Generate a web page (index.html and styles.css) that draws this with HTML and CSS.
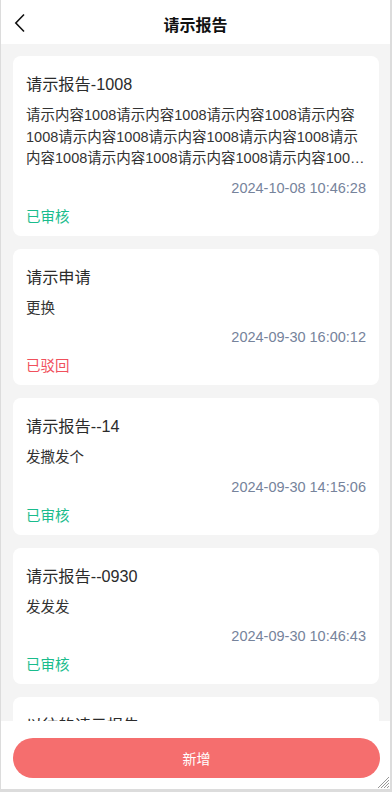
FILE: index.html
```html
<!DOCTYPE html>
<html lang="zh-CN">
<head>
    <meta charset="UTF-8">
    <meta name="viewport" content="width=device-width, initial-scale=1.0">
    <title>请示报告</title>
    <link rel="stylesheet" href="styles.css">
</head>
<body>
    <div class="frame">
        <!-- Header -->
        <header class="nav-bar">
            <a href="#" class="nav-back">
                <svg width="12" height="20" viewBox="0 0 12 20">
                    <path d="M10 1.5 L1.8 10 L10 18.5" fill="none" stroke="#111" stroke-width="1.6"/>
                </svg>
            </a>
            <h1 class="nav-title">请示报告</h1>
            <span></span>
        </header>

        <!-- Report List -->
        <section class="report-list">
            <div class="report-card">
                <h2 class="report-title">请示报告-1008</h2>
                <p class="report-content">请示内容1008请示内容1008请示内容1008请示内容1008请示内容1008请示内容1008请示内容1008请示内容1008请示内容1008请示内容1008请示内容1008请示内容1008</p>
                <p class="report-time">2024-10-08 10:46:28</p>
                <p class="report-status approved">已审核</p>
            </div>
            <div class="report-card">
                <h2 class="report-title">请示申请</h2>
                <p class="report-content">更换</p>
                <p class="report-time">2024-09-30 16:00:12</p>
                <p class="report-status rejected">已驳回</p>
            </div>
            <div class="report-card">
                <h2 class="report-title">请示报告--14</h2>
                <p class="report-content">发撒发个</p>
                <p class="report-time">2024-09-30 14:15:06</p>
                <p class="report-status approved">已审核</p>
            </div>
            <div class="report-card">
                <h2 class="report-title">请示报告--0930</h2>
                <p class="report-content">发发发</p>
                <p class="report-time">2024-09-30 10:46:43</p>
                <p class="report-status approved">已审核</p>
            </div>
            <div class="report-card">
                <h2 class="report-title">以往的请示报告</h2>
                <p class="report-content">内容</p>
                <p class="report-time">2024-09-29 09:12:30</p>
                <p class="report-status approved">已审核</p>
            </div>
        </section>

        <!-- Add Button -->
        <footer class="footer">
            <button type="button" class="add-btn">新增</button>
        </footer>

        <svg class="resize-grip" width="12" height="12" viewBox="0 0 12 12">
            <path d="M11 3 L3 11 M11 6 L6 11 M11 9 L9 11 M11 0 L0 11" stroke="#999" stroke-width="1"/>
        </svg>
    </div>
</body>
</html>
```

FILE: styles.css
```css
/* General Reset */
* {
    margin: 0;
    padding: 0;
    box-sizing: border-box;
    font-family: "Liberation Sans", "Noto Sans CJK SC", sans-serif;
}

body {
    background-color: #ffffff;
}

.frame {
    position: relative;
    display: flex;
    flex-direction: column;
    height: 100vh;
    background-color: #f4f4f4;
    border-left: 1px solid #dcdcdc;
    border-right: 2px solid #dcdcdc;
    border-bottom: 3px solid #dcdcdc;
    overflow: hidden;
}

/* Header */
.nav-bar {
    display: grid;
    grid-template-columns: 60px 1fr 60px;
    align-items: center;
    height: 44px;
    background-color: #ffffff;
    flex-shrink: 0;
}

.nav-back {
    display: flex;
    align-items: center;
    padding-left: 13px;
    padding-top: 2px;
}

.nav-title {
    text-align: center;
    font-size: 16px;
    font-weight: bold;
    color: #111;
    padding-top: 3px;
}

/* List */
.report-list {
    flex: 1;
    overflow: hidden;
    display: flex;
    flex-direction: column;
    gap: 13px;
    padding: 12px 11px 0 12px;
}

.report-card {
    flex-shrink: 0;
    background: #ffffff;
    border-radius: 8px;
    padding: 16px 13px 9px;
}

.report-title {
    font-size: 16.2px;
    line-height: 24px;
    font-weight: normal;
    color: #2b2b2b;
}

.report-content {
    margin-top: 9px;
    font-size: 14.5px;
    line-height: 21.5px;
    color: #333;
    display: -webkit-box;
    -webkit-line-clamp: 3;
    -webkit-box-orient: vertical;
    overflow: hidden;
}

.report-time {
    margin-top: 8px;
    font-size: 14.5px;
    line-height: 20px;
    color: #76839b;
    text-align: right;
}

.report-status {
    margin-top: 9px;
    font-size: 14.5px;
    line-height: 20px;
}

.approved {
    color: #1abc8c;
}

.rejected {
    color: #f0505c;
}

/* Footer */
.footer {
    flex-shrink: 0;
    background: #ffffff;
    padding: 17px 10px 11px 12px;
}

.add-btn {
    width: 100%;
    height: 40px;
    border: none;
    border-radius: 20px;
    background-color: #f56e6e;
    color: #ffffff;
    font-size: 14px;
    cursor: pointer;
}

.resize-grip {
    position: absolute;
    right: 0;
    bottom: 0;
}
```
